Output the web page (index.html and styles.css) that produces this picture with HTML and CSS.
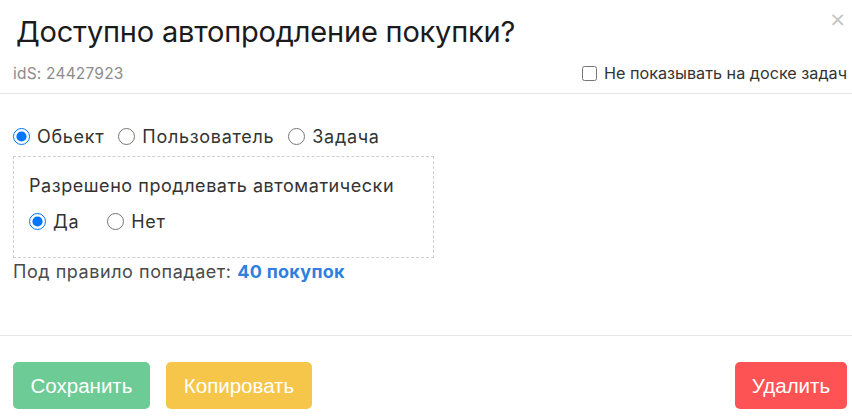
FILE: index.html
```html
<!DOCTYPE html>
<html lang="ru">
<head>
<meta charset="utf-8">
<link rel="stylesheet" href="styles.css">
</head>
<body>
<div class="modal">
  <div class="header">
    <div class="title-row">
      <h1 class="title">Доступно автопродление покупки?</h1>
      <span class="close">×</span>
    </div>
    <div class="meta-row">
      <span class="ids">idS: 24427923</span>
      <label class="hide-opt"><input type="checkbox" class="checkbox">Не показывать на доске задач</label>
    </div>
  </div>
  <div class="body">
    <div class="radio-row">
      <label class="radio"><input type="radio" name="target" checked>Обьект</label>
      <label class="radio"><input type="radio" name="target">Пользователь</label>
      <label class="radio"><input type="radio" name="target">Задача</label>
    </div>
    <div class="rule-box">
      <div class="rule-label">Разрешено продлевать автоматически</div>
      <div class="radio-row yesno">
        <label class="radio"><input type="radio" name="auto" checked>Да</label>
        <label class="radio"><input type="radio" name="auto">Нет</label>
      </div>
    </div>
    <div class="summary">Под правило попадает: <a class="count">40 покупок</a></div>
  </div>
  <div class="footer">
    <button class="btn save">Сохранить</button>
    <button class="btn copy">Копировать</button>
    <button class="btn delete">Удалить</button>
  </div>
</div>
</body>
</html>
```

FILE: styles.css
```css
html, body {
  margin: 0;
  padding: 0;
  background: #fff;
}
body {
  font-family: Inter, "Noto Sans", sans-serif;
  color: #2b2b2b;
  width: 852px;
  height: 417px;
  overflow: hidden;
}
.header {
  border-bottom: 1px solid #e6e6e6;
  padding: 0 5px 0 13px;
  height: 94px;
  box-sizing: border-box;
}
.title-row {
  display: flex;
  justify-content: space-between;
  align-items: flex-start;
  height: 57px;
}
.title {
  margin: 0;
  padding: 14px 0 0 3px;
  font-size: 29px;
  font-weight: 400;
  line-height: 36px;
  color: #1b1b1b;
  letter-spacing: -0.2px;
}
.close {
  color: #c2c2c2;
  font-size: 20px;
  line-height: 20px;
  margin-top: 9px;
  margin-right: 1px;
  font-family: "DejaVu Sans", sans-serif;
}
.meta-row {
  display: flex;
  justify-content: space-between;
  align-items: center;
  height: 32px;
}
.ids {
  font-size: 15.5px;
  letter-spacing: 0.2px;
  color: #8c8c8c;
}
.hide-opt {
  display: flex;
  align-items: center;
  gap: 7px;
  font-size: 16.2px;
  color: #333;
}
.checkbox {
  margin: 0;
  width: 15px;
  height: 15px;
}
.body {
  padding: 29px 13px 0 13px;
  height: 242px;
  border-bottom: 1px solid #e6e6e6;
  box-sizing: border-box;
}
.radio-row {
  display: flex;
  gap: 14px;
  font-size: 18px;
  letter-spacing: 0.7px;
  color: #333;
  height: 26px;
  align-items: center;
}
.radio {
  display: flex;
  align-items: center;
  gap: 7px;
}
.radio input {
  margin: 0;
  width: 17px;
  height: 17px;
}
.rule-box {
  margin-top: 7px;
  width: 421px;
  height: 102px;
  box-sizing: border-box;
  border: 1px dashed #cfcfcf;
  padding: 16px 15px 0 15px;
}
.rule-label {
  font-size: 18px;
  letter-spacing: 0.55px;
  color: #333;
  line-height: 26px;
}
.yesno {
  margin-top: 9px;
  gap: 28px;
}
.summary {
  margin-top: 1px;
  font-size: 18px;
  letter-spacing: 0.55px;
  color: #4a4a4a;
  line-height: 26px;
}
.count {
  color: #2f7fe0;
  font-weight: 700;
  letter-spacing: 0.3px;
}
.footer {
  display: flex;
  padding: 26px 5px 0 13px;
  gap: 16px;
}
.btn {
  height: 47px;
  border: none;
  border-radius: 5px;
  color: #fff;
  font-family: "Liberation Sans", Arial, sans-serif;
  font-size: 20.5px;
  padding: 0;
}
.save {
  background: #6dcb95;
  width: 137px;
}
.copy {
  background: #f6c64b;
  width: 146px;
}
.delete {
  background: #fe5355;
  width: 112px;
  margin-left: auto;
}
```
